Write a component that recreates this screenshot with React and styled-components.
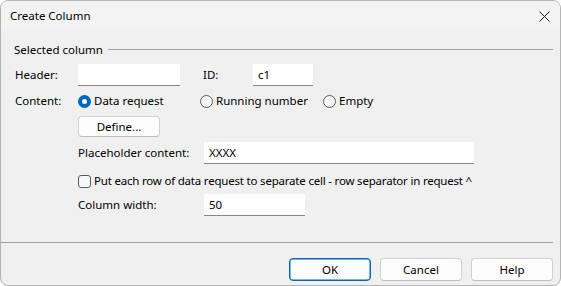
import React from "react";
import styled, { createGlobalStyle, css } from "styled-components";

const GlobalStyle = createGlobalStyle`
  html, body {
    margin: 0;
    padding: 0;
    background: #ffffff;
  }
  body {
    font-family: "Noto Sans", "Segoe UI", sans-serif;
    font-size: 11.5px;
    color: #000000;
  }
  * {
    box-sizing: border-box;
  }
`;

const Window = styled.div`
  width: 561px;
  height: 286px;
  border: 1px solid #b4b4b4;
  border-radius: 8px;
  background: #f0f0f0;
  overflow: hidden;
  display: flex;
  flex-direction: column;
`;

const TitleBar = styled.div`
  height: 30px;
  display: flex;
  align-items: center;
  justify-content: space-between;
  padding: 0 10px 0 9px;
  background: #f3f3f3;
`;

const Title = styled.span`
  line-height: 16px;
`;

const CloseButton = styled.div`
  width: 12px;
  height: 12px;
  display: flex;
  align-items: center;
  justify-content: center;
`;

const Body = styled.div`
  flex: 1;
  display: flex;
  flex-direction: column;
  padding: 9px 7px 0 12px;
`;

const GroupHeader = styled.div`
  height: 18px;
  display: flex;
  align-items: center;
  gap: 5px;
  padding-left: 1px;
`;

const GroupLine = styled.div`
  flex: 1;
  height: 1px;
  background: #a0a0a0;
`;

const Row = styled.div`
  display: flex;
  align-items: center;
  height: ${({ $h }) => $h || 22}px;
  margin-top: ${({ $mt }) => $mt || 0}px;
  padding-left: ${({ $indent }) => ($indent ? 65 : 2)}px;
`;

const Label = styled.span`
  width: ${({ $w }) => $w}px;
  flex-shrink: 0;
  line-height: 16px;
`;

const CheckText = styled.span`
  line-height: 16px;
  letter-spacing: -0.2px;
`;

const TextBox = styled.div`
  width: ${({ $w }) => $w}px;
  height: 22px;
  background: #ffffff;
  border-bottom: 1px solid #868686;
  padding: 0 5px;
  display: flex;
  align-items: center;
  line-height: 16px;
  flex-shrink: 0;
`;

const RadioItem = styled.label`
  width: ${({ $w }) => $w}px;
  display: flex;
  align-items: center;
  gap: 3px;
  flex-shrink: 0;
  line-height: 16px;
`;

const RadioCircle = styled.span`
  width: 13px;
  height: 13px;
  border-radius: 50%;
  flex-shrink: 0;
  display: flex;
  align-items: center;
  justify-content: center;
  ${({ $checked }) =>
    $checked
      ? css`
          background: #0067c0;
          &::after {
            content: "";
            width: 5px;
            height: 5px;
            border-radius: 50%;
            background: #ffffff;
          }
        `
      : css`
          background: #f7f7f7;
          border: 1px solid #5c5c5c;
        `}
`;

const CheckBox = styled.span`
  width: 13px;
  height: 13px;
  border: 1px solid #5c5c5c;
  border-radius: 3px;
  background: #f7f7f7;
  flex-shrink: 0;
  margin-right: 3px;
`;

const Button = styled.div`
  width: 82px;
  height: ${({ $h }) => $h || 23}px;
  border-radius: 4px;
  background: #fdfdfd;
  border: 1px solid #d0d0d0;
  border-bottom-color: #bcbcbc;
  display: flex;
  align-items: center;
  justify-content: center;
  line-height: 16px;
  ${({ $primary }) =>
    $primary &&
    css`
      border: 1px solid #0067c0;
      box-shadow: inset 0 0 0 0.5px #0067c0;
    `}
`;

const Footer = styled.div`
  display: flex;
  flex-direction: column;
  padding-bottom: 4px;
`;

const Separator = styled.div`
  height: 1px;
  margin-right: 7px;
  background: #a0a0a0;
`;

const ButtonBar = styled.div`
  display: flex;
  justify-content: flex-end;
  gap: 9px;
  padding: 15px 7px 0 0;
`;

const CloseIcon = () => (
  <svg width="11" height="11" viewBox="0 0 11 11">
    <path d="M0.5 0.5 L10.5 10.5 M10.5 0.5 L0.5 10.5" stroke="#1a1a1a" strokeWidth="1" />
  </svg>
);

export default function App() {
  return (
    <>
      <GlobalStyle />
      <Window>
        <TitleBar>
          <Title>Create Column</Title>
          <CloseButton>
            <CloseIcon />
          </CloseButton>
        </TitleBar>
        <Body>
          <GroupHeader>
            <span>Selected column</span>
            <GroupLine />
          </GroupHeader>

          <Row $mt={6}>
            <Label $w={63}>Header:</Label>
            <TextBox $w={102} />
            <Label $w={23} />
            <Label $w={50}>ID:</Label>
            <TextBox $w={60}>c1</TextBox>
          </Row>

          <Row $mt={6} $h={18}>
            <Label $w={63}>Content:</Label>
            <RadioItem $w={122}>
              <RadioCircle $checked />
              Data request
            </RadioItem>
            <RadioItem $w={123}>
              <RadioCircle />
              Running number
            </RadioItem>
            <RadioItem $w={80}>
              <RadioCircle />
              Empty
            </RadioItem>
          </Row>

          <Row $mt={6} $h={21} $indent>
            <Button $h={21}>Define...</Button>
          </Row>

          <Row $mt={5} $indent>
            <Label $w={126}>Placeholder content:</Label>
            <TextBox $w={270}>XXXX</TextBox>
          </Row>

          <Row $mt={8} $h={18} $indent>
            <CheckBox />
            <CheckText>Put each row of data request to separate cell - row separator in request ^</CheckText>
          </Row>

          <Row $mt={4} $indent>
            <Label $w={126}>Column width:</Label>
            <TextBox $w={101}>50</TextBox>
          </Row>
        </Body>
        <Footer>
          <Separator />
          <ButtonBar>
            <Button $primary>OK</Button>
            <Button>Cancel</Button>
            <Button>Help</Button>
          </ButtonBar>
        </Footer>
      </Window>
    </>
  );
}
